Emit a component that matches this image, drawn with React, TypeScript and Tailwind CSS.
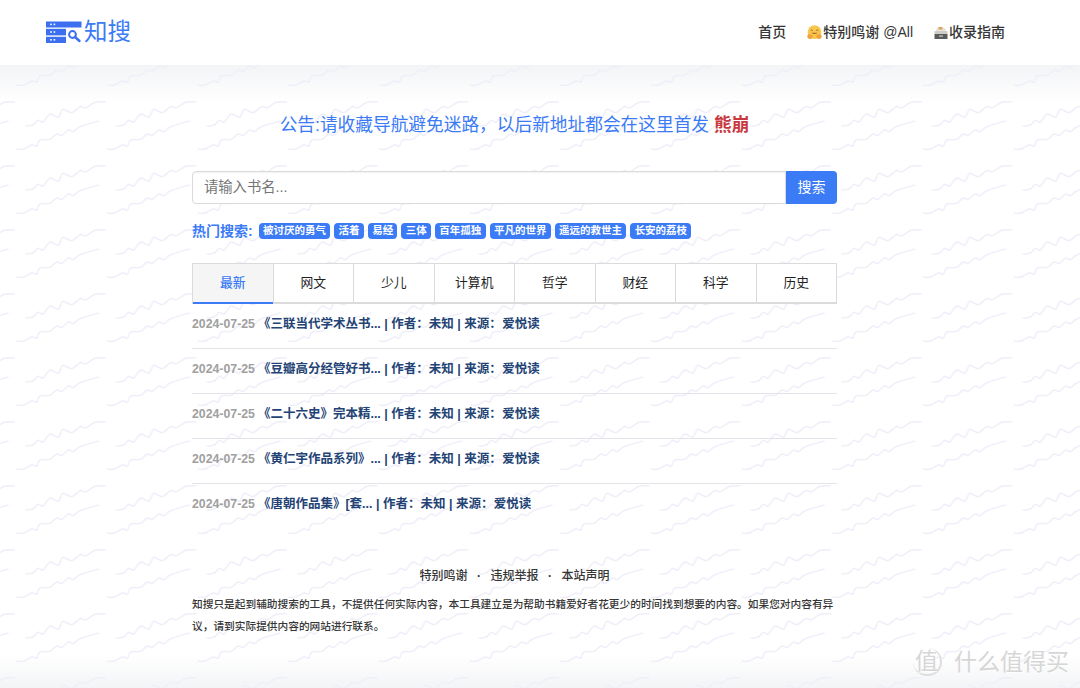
const font = "font-['Liberation_Sans','Noto_Sans_CJK_SC',sans-serif]";

const wave1 = [[11,31],[18,30],[23,25.3],[28,27],[35,19],[43,22.3],[48,14.3],[56.7,17.7],[65,11.7],[71,12.7],[80,7.3],[90,6.7]];
const wave2 = [[2,54.3],[9,54],[16.7,50],[21.7,51],[25,45],[35,44.3],[41.7,39],[46.7,40.3],[53.3,35],[58.3,36.7],[65,31.7],[83.7,26]];

// catmull-rom through the points so the bumps keep their height
const smooth = (pts: number[][]) => {
  let d = `M${pts[0][0]} ${pts[0][1]}`;
  for (let i = 0; i < pts.length - 1; i++) {
    const p0 = pts[i - 1] || pts[i];
    const p1 = pts[i];
    const p2 = pts[i + 1];
    const p3 = pts[i + 2] || p2;
    const c1x = p1[0] + (p2[0] - p0[0]) / 6;
    const c1y = p1[1] + (p2[1] - p0[1]) / 6;
    const c2x = p2[0] - (p3[0] - p1[0]) / 6;
    const c2y = p2[1] - (p3[1] - p1[1]) / 6;
    d += ` C${c1x} ${c1y} ${c2x} ${c2y} ${p2[0]} ${p2[1]}`;
  }
  return d;
};

const Waves = () => (
  <svg className="absolute inset-0 w-full h-full pointer-events-none" aria-hidden="true">
    <defs>
      <pattern id="waves" x="15" y="31" width="90.67" height="64" patternUnits="userSpaceOnUse">
        <path d={smooth(wave1)} fill="none" stroke="#efeef9" strokeWidth="1.5" strokeLinecap="round" />
        <path d={smooth(wave2)} fill="none" stroke="#efeef9" strokeWidth="1.5" strokeLinecap="round" />
      </pattern>
    </defs>
    <rect width="100%" height="100%" fill="url(#waves)" />
  </svg>
);

const Logo = () => (
  <svg width="36" height="23" viewBox="0 0 36 23" className="shrink-0">
    <rect x="0" y="0.5" width="35.5" height="6" fill="#3b6ff0" />
    <rect x="0" y="7.8" width="20" height="6.6" fill="#3b6ff0" />
    <rect x="0" y="15.8" width="20" height="6.2" fill="#3b6ff0" />
    <g fill="#fff">
      <rect x="4.2" y="2.6" width="1.6" height="1.6" />
      <rect x="7.6" y="2.6" width="1.6" height="1.6" />
      <rect x="4.2" y="10.2" width="1.6" height="1.6" />
      <rect x="7.6" y="10.2" width="1.6" height="1.6" />
      <rect x="4.2" y="18" width="1.6" height="1.6" />
      <rect x="7.6" y="18" width="1.6" height="1.6" />
    </g>
    <circle cx="26.5" cy="13.5" r="3.4" fill="none" stroke="#3b6ff0" strokeWidth="2" />
    <path d="M29 16 L33.5 20" stroke="#3b6ff0" strokeWidth="2.4" strokeLinecap="round" />
  </svg>
);

const HugEmoji = () => (
  <svg width="15" height="15" viewBox="0 0 14 14" className="shrink-0">
    <circle cx="7" cy="6.6" r="6.4" fill="#f9c64e" />
    <path d="M3.4 5.2 Q4.4 4 5.4 5.2 M8.6 5.2 Q9.6 4 10.6 5.2" fill="none" stroke="#8a5a1e" strokeWidth="0.8" />
    <path d="M4 7.2 Q7 9.8 10 7.2 Z" fill="#a8642a" />
    <ellipse cx="2.8" cy="10.8" rx="2.5" ry="2.2" fill="#f0a23c" />
    <ellipse cx="11.2" cy="10.8" rx="2.5" ry="2.2" fill="#f0a23c" />
  </svg>
);

const BoxEmoji = () => (
  <svg width="14" height="14" viewBox="0 0 14 14" className="shrink-0">
    <path d="M2 5 L3 2 H11 L12 5 Z" fill="#e6e2da" />
    <rect x="4.5" y="1" width="4" height="2.5" fill="#dca35a" />
    <rect x="0.5" y="5" width="13" height="3" fill="#cfcdc8" />
    <rect x="0.5" y="8" width="13" height="5" fill="#5b5b5b" />
    <rect x="5" y="9.5" width="4" height="1.2" fill="#c9c9c9" />
  </svg>
);

const hot = ["被讨厌的勇气", "活着", "易经", "三体", "百年孤独", "平凡的世界", "遥远的救世主", "长安的荔枝"];
const tabs = ["最新", "网文", "少儿", "计算机", "哲学", "财经", "科学", "历史"];
const rows = [
  "《三联当代学术丛书...",
  "《豆瓣高分经管好书...",
  "《二十六史》完本精...",
  "《黄仁宇作品系列》...",
  "《唐朝作品集》[套...",
];

export default function App() {
  return (
    <div className={`${font} relative h-[688px] overflow-hidden text-[#363636] bg-[linear-gradient(to_bottom,#f3f4f6_65px,#ffffff_103px,#ffffff_655px,#f3f4f6_688px)]`}>
      <Waves />

      <nav className="relative bg-white h-[65px] flex items-center pl-[46px] pr-[75px]">
        <div className="flex items-center gap-[2px]">
          <Logo />
          <span className="text-[23.5px] leading-none text-[#3b7bf6]">知搜</span>
        </div>
        <div className="ml-auto flex items-center text-[14px] font-medium">
          <span>首页</span>
          <span className="ml-[21px] flex items-center gap-[1px]">
            <HugEmoji />
            特别鸣谢 @All
          </span>
          <span className="ml-[21px] flex items-center gap-[1px]">
            <BoxEmoji />
            收录指南
          </span>
        </div>
      </nav>

      <main className="relative w-[645px] ml-[192px]">
        <p className="mt-[47px] text-center text-[17.7px] leading-[26px] text-[#3b7bf6]">
          公告:请收藏导航避免迷路，以后新地址都会在这里首发 <b className="text-[#c9373f]">熊崩</b>
        </p>

        <div className="mt-[33px] flex h-[33px]">
          <div className="flex-1 flex items-center bg-white border border-[#dbdbdb] rounded-l-[4px] pl-[11px] text-[14.3px] text-[#757575] shadow-[inset_0_1px_2px_rgba(10,10,10,0.06)]">
            请输入书名...
          </div>
          <button className="w-[51px] bg-[#3b7bf6] text-white text-[14px] rounded-r-[4px]">搜索</button>
        </div>

        <div className="mt-[19px] flex items-center h-[16px]">
          <span className="text-[14px] font-semibold text-[#3b7bf6] mr-[6px]">热门搜索:</span>
          <div className="flex gap-[4px]">
            {hot.map((t) => (
              <span key={t} className="h-[16px] px-[4.3px] flex items-center rounded-[4px] bg-[#3b7bf6] text-white text-[10.5px] font-semibold whitespace-nowrap">
                {t}
              </span>
            ))}
          </div>
        </div>

        <div className="mt-[24px] flex h-[41px] bg-white border-t border-x border-[#dbdbdb]">
          {tabs.map((t, i) => (
            <div
              key={t}
              className={
                i === 0
                  ? "flex-1 flex items-center justify-center text-[12.8px] border-b-2 border-[#3b7bf6] bg-[#f5f5f5] text-[#3b7bf6] font-medium"
                  : "flex-1 flex items-center justify-center text-[12.8px] border-b-2 border-b-[#dbdbdb] border-l border-l-[#dbdbdb] text-[#1f1f1f]"
              }
            >
              {t}
            </div>
          ))}
        </div>

        <ul>
          {rows.map((r, i) => (
            <li
              key={r}
              className={`h-[45px] pt-[11px] flex items-start text-[12.5px] leading-[18px] font-semibold text-[#234375] whitespace-pre ${i < 4 ? "border-b border-[#e3e3ea]" : ""}`}
            >
              <span className="font-bold text-[12.3px] text-[#a0a0a0] mr-[3px]">2024-07-25</span>
              {r} | 作者：未知 | 来源：<span className="-ml-[3px]"> 爱悦读</span>
            </li>
          ))}
        </ul>

        <div className="mt-[38px] flex justify-center gap-[8px] text-[12px] leading-[18px] font-medium">
          <span>特别鸣谢</span>
          <span className="w-[7px] text-center font-bold">·</span>
          <span>违规举报</span>
          <span className="w-[7px] text-center font-bold">·</span>
          <span>本站声明</span>
        </div>
        <p className="mt-[8px] text-[10.7px] leading-[22px] font-medium text-[#363636]">
          知搜只是起到辅助搜索的工具，不提供任何实际内容，本工具建立是为帮助书籍爱好者花更少的时间找到想要的内容。如果您对内容有异议，请到实际提供内容的网站进行联系。
        </p>
      </main>

      {/* watermark sits over the page */}
      <div className="absolute left-[913px] top-[648px] flex items-center text-[#d6d6d6] [text-shadow:0_1px_1px_rgba(255,255,255,0.9)]">
        <span className="w-[29px] h-[28px] rounded-full border-r-2 border-b-2 border-[#dedede] flex items-center justify-center text-[23px] leading-none">值</span>
        <span className="ml-[12px] text-[23px] leading-none whitespace-nowrap">什么值得买</span>
      </div>
    </div>
  );
}
